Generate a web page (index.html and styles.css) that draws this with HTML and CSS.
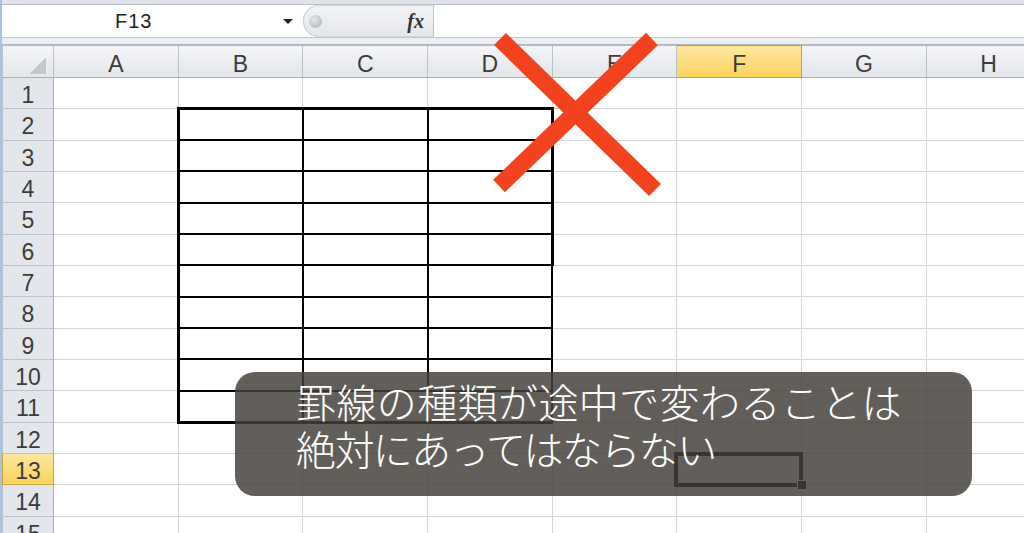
FILE: index.html
```html
<!DOCTYPE html>
<html lang="ja">
<head>
  <meta charset="UTF-8" />
  <title>罫線の種類</title>
  <link rel="stylesheet" href="styles.css">
</head>
<body>
  <div class="app">
    <div class="top-strip"></div>
    <div class="formula-bar">
      <div class="name-box">
        <span class="cell-ref">F13</span>
        <span class="drop-arrow"></span>
      </div>
      <div class="fx-box">
        <span class="knob"></span>
        <span class="fx">fx</span>
      </div>
      <div class="formula-input"></div>
    </div>
    <div class="sep"></div>

    <table class="sheet">
      <colgroup>
        <col class="rh-col">
        <col><col><col><col><col><col><col><col>
      </colgroup>
      <thead>
        <tr>
          <th class="corner"><span class="tri"></span></th>
          <th>A</th><th>B</th><th>C</th><th>D</th><th>E</th><th class="sel">F</th><th>G</th><th>H</th>
        </tr>
      </thead>
      <tbody>
        <tr><th>1</th><td></td><td></td><td></td><td></td><td></td><td></td><td></td><td></td></tr>
        <tr><th>2</th><td></td><td class="k t l"></td><td class="k t"></td><td class="k t r"></td><td></td><td></td><td></td><td></td></tr>
        <tr><th>3</th><td></td><td class="k l"></td><td class="k"></td><td class="k r"></td><td></td><td></td><td></td><td></td></tr>
        <tr><th>4</th><td></td><td class="k l"></td><td class="k"></td><td class="k r"></td><td></td><td></td><td></td><td></td></tr>
        <tr><th>5</th><td></td><td class="k l"></td><td class="k"></td><td class="k r"></td><td></td><td></td><td></td><td></td></tr>
        <tr><th>6</th><td></td><td class="k l"></td><td class="k"></td><td class="k r"></td><td></td><td></td><td></td><td></td></tr>
        <tr><th>7</th><td></td><td class="k l"></td><td class="k"></td><td class="k"></td><td></td><td></td><td></td><td></td></tr>
        <tr><th>8</th><td></td><td class="k l"></td><td class="k"></td><td class="k"></td><td></td><td></td><td></td><td></td></tr>
        <tr><th>9</th><td></td><td class="k l"></td><td class="k"></td><td class="k"></td><td></td><td></td><td></td><td></td></tr>
        <tr><th>10</th><td></td><td class="k l"></td><td class="k"></td><td class="k"></td><td></td><td></td><td></td><td></td></tr>
        <tr><th>11</th><td></td><td class="k l b"></td><td class="k b"></td><td class="k b"></td><td></td><td></td><td></td><td></td></tr>
        <tr><th>12</th><td></td><td></td><td></td><td></td><td></td><td></td><td></td><td></td></tr>
        <tr><th class="sel">13</th><td></td><td></td><td></td><td></td><td></td><td class="active"></td><td></td><td></td></tr>
        <tr><th>14</th><td></td><td></td><td></td><td></td><td></td><td></td><td></td><td></td></tr>
        <tr><th>15</th><td></td><td></td><td></td><td></td><td></td><td></td><td></td><td></td></tr>
      </tbody>
    </table>

    <!-- big red cross over the table corner -->
    <svg class="cross" width="1024" height="533" viewBox="2 0 1024 533">
      <line x1="502" y1="39" x2="657" y2="190" />
      <line x1="654" y1="39" x2="501" y2="186" />
    </svg>

    <div class="caption">
      <div>罫線の種類が途中で変わることは</div>
      <div class="tight">絶対にあってはならない</div>
    </div>
  </div>
</body>
</html>
```

FILE: styles.css
```css
body {
  margin: 0;
  background: #fff;
  font-family: "Liberation Sans", Arial, sans-serif;
  overflow: hidden;
}

.app {
  position: relative;
  width: 1024px;
  height: 533px;
  overflow: hidden;
  box-sizing: border-box;
  border-left: 2px solid #a8c4e5;
}

/* formula bar */
.top-strip {
  height: 4px;
  background: #dfe3e8;
  border-bottom: 1px solid #b9bfc6;
}

.formula-bar {
  display: flex;
  height: 32px;
  background: #fff;
}

.name-box {
  width: 301px;
  display: flex;
  align-items: center;
}

.cell-ref {
  margin-left: 113px;
  font-size: 20px;
  color: #222;
  letter-spacing: 1px;
}

.drop-arrow {
  margin-left: auto;
  margin-right: 10px;
  width: 0;
  height: 0;
  border-left: 5px solid transparent;
  border-right: 5px solid transparent;
  border-top: 5px solid #222;
}

.fx-box {
  width: 131px;
  display: flex;
  align-items: center;
  box-sizing: border-box;
  border-radius: 16px 0 0 16px;
  border-right: 1px solid #bfc4ca;
  background: linear-gradient(#f3f4f6, #e4e6e9);
  box-shadow: inset 1px 0 0 #c9cdd2, inset 0 1px 0 #d4d7db, inset 0 -1px 0 #d4d7db;
}

.knob {
  width: 13px;
  height: 13px;
  margin-left: 6px;
  border-radius: 50%;
  background: radial-gradient(circle at 40% 35%, #e6e8eb, #a9adb3);
}

.fx {
  margin-left: auto;
  margin-right: 9px;
  font-family: "Liberation Serif", serif;
  font-style: italic;
  font-weight: bold;
  font-size: 20px;
  color: #333;
}

.formula-input {
  flex: 1;
  background: #fff;
}

.sep {
  height: 8px;
  box-sizing: border-box;
  background: #eceff2;
  border-top: 1px solid #c1c6cc;
  border-bottom: 1px solid #afb5bd;
}

/* sheet */
.sheet {
  table-layout: fixed;
  border-collapse: collapse;
  width: 1048px;
}

.sheet col {
  width: 124.7px;
}

.sheet col.rh-col {
  width: 51px;
}

.sheet tr {
  height: 31.33px;
}

.sheet thead tr {
  height: 32px;
}

.sheet th {
  padding: 4px 0 0;
  font-weight: normal;
  font-size: 23px;
  line-height: 20px;
  color: #3c3c3c;
  border: 1px solid #bcc2c9;
  text-align: center;
}

.sheet thead th {
  background: linear-gradient(#f4f5f7, #e3e6ea);
  border-bottom-color: #aab0b8;
}

.sheet tbody th {
  background: #e3e6eb;
  border-right-color: #aab0b8;
}

.sheet th.sel {
  background: linear-gradient(#fde7a0, #f9d35c);
  border-color: #c8a440;
}

.sheet th.corner {
  text-align: right;
  vertical-align: bottom;
  padding: 0 7px 3px 0;
}

.tri {
  display: inline-block;
  vertical-align: bottom;
  width: 16px;
  height: 16px;
  background: linear-gradient(to bottom right, transparent 50%, #c3c7cc 50%);
}

.sheet td {
  padding: 0;
  border: 1px solid #d6d6d6;
}

/* table borders */
.sheet td.k { border: 2px solid #000; }
.sheet td.t { border-top-width: 3px; }
.sheet td.l { border-left-width: 3px; }
.sheet td.r { border-right-width: 3px; }
.sheet td.b { border-bottom-width: 3px; }

.sheet td.active {
  position: relative;
}

.sheet td.active::before {
  content: "";
  position: absolute;
  top: -2px;
  left: -3px;
  right: -2px;
  bottom: -3px;
  border: 4px solid #000;
}

.sheet td.active::after {
  content: "";
  position: absolute;
  right: -6px;
  bottom: -6px;
  width: 8px;
  height: 8px;
  background: #000;
  border: 1px solid #fff;
}

/* overlays */
.cross {
  position: absolute;
  top: 0;
  left: -2px;
}

.cross line {
  stroke: #f2431e;
  stroke-width: 17;
}

.caption {
  position: absolute;
  left: 233px;
  top: 372px;
  width: 737px;
  height: 124px;
  box-sizing: border-box;
  padding: 6px 0 0 61px;
  border-radius: 20px;
  background: rgba(68, 64, 60, 0.84);
  color: #fff;
  font-family: "Noto Sans CJK JP", sans-serif;
  font-weight: 300;
  font-size: 40px;
  line-height: 47px;
  letter-spacing: 0.4px;
}

.caption .tight {
  letter-spacing: -1.6px;
}
```
